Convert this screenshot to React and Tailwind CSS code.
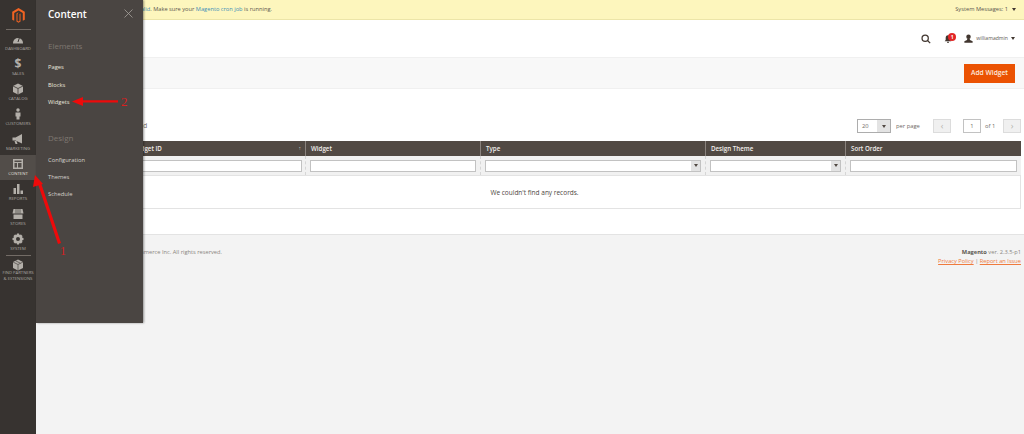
import React from "react";

const Ic = ({ children, w = 12, h = 12 }) => (
  <svg width={w} height={h} viewBox="0 0 24 24" fill="#b3afa9">{children}</svg>
);

const items = [
  ["DASHBOARD", <Ic><path d="M2 20a10 10 0 1 1 20 0v1H2z" /><path d="M12 18l3-9" stroke="#373330" strokeWidth="2" /></Ic>],
  ["SALES", <span className="text-[12px] leading-[12px] font-bold text-[#b3afa9]">$</span>],
  ["CATALOG", <Ic><path d="M12 1l10 5v12l-10 5-10-5V6z" /><path d="M2 6l10 5 10-5M12 11v12" stroke="#373330" strokeWidth="1.6" fill="none" /></Ic>],
  ["CUSTOMERS", <Ic><circle cx="12" cy="4" r="3.5" /><path d="M7 9h10v8h-2v6H9v-6H7z" /></Ic>],
  ["MARKETING", <Ic><path d="M1 9h6l13-7v19L7 15H1z" /><path d="M5 16h4l2 6H7z" /></Ic>],
  ["CONTENT", <Ic><path fillRule="evenodd" d="M2 2h20v20H2zM5 5v3h14V5zM5 10v9h5v-9zM12 10v9h7v-9z" /></Ic>, true],
  ["REPORTS", <Ic><path d="M3 10h5v12H3zM10 2h5v20h-5zM17 15h5v7h-5z" /></Ic>],
  ["STORES", <Ic><path d="M3 2h18l2 9H1z" /><path d="M3 13h18v9H3z" /><path d="M8 2v9M12 2v9M16 2v9" stroke="#373330" strokeWidth="1.2" /></Ic>],
  ["SYSTEM", <Ic><path fillRule="evenodd" d="M10 1h4l1 3 3-1 3 3-1 3 3 1v4l-3 1 1 3-3 3-3-1-1 3h-4l-1-3-3 1-3-3 1-3-3-1v-4l3-1-1-3 3-3 3 1zM12 8a4 4 0 1 0 0 8 4 4 0 0 0 0-8z" /></Ic>],
];

const Th = ({ className = "", children }) => (
  <div className={`h-full flex items-center pl-[5px] border-l border-[#8a837e] text-[#f1eeeb] font-semibold text-[6.2px] ${className}`}>{children}</div>
);

const Select = () => (
  <div className="h-[12px] flex-1 flex bg-white border border-[#c2c2c2]">
    <div className="flex-1" />
    <div className="w-[9px] bg-[#e3e3e3] flex items-center justify-center">
      <div className="border-x-[2px] border-t-[3px] border-x-transparent border-t-[#514943]" />
    </div>
  </div>
);

const Inp = () => <div className="h-[12px] flex-1 bg-white border border-[#c2c2c2]" />;

const Cell = ({ className = "", children }) => (
  <div className={`h-full flex items-center px-[4px] border-l border-dashed border-[#d6d6d6] ${className}`}>{children}</div>
);

export default function App() {
  return (
    <div className="relative w-[1024px] h-[434px] overflow-hidden flex bg-white font-['Open_Sans',sans-serif] text-[#41362f]">
      {/* Sidebar */}
      <aside className="w-[36px] shrink-0 bg-[#373330] flex flex-col items-center">
        <div className="h-[30px] w-[25px] border-b border-[#736c66] flex items-start justify-center pt-[8px]">
          <svg width="15" height="16" viewBox="0 0 24 28">
            <path d="M12 0L1 6.500v14l3.500 2V8.700L12 4.400l7.500 4.300v13.800l3.500-2v-14z" fill="#f26322" />
            <path d="M12 7.500L8.500 9.600V23.500L12 26l3.500-2.500V9.600l-1.700 1v12l-1.800 1-1.800-1v-12z" fill="#f26322" />
          </svg>
        </div>
        {items.map(([label, icon, active]) => (
          <div key={label} className={`w-full h-[25px] shrink-0 flex flex-col items-center justify-end pb-[4px] ${active ? "bg-[#524d49]" : ""}`}>
            <div className="h-[13px] flex items-center justify-center">{icon}</div>
            <div className={`text-[4.3px] leading-[6px] ${active ? "text-[#e3e0dd]" : "text-[#aaa6a0]"}`}>{label}</div>
          </div>
        ))}
        <div className="w-[25px] border-t border-[#736c66]" />
        <div className="pt-[3px] flex flex-col items-center">
          <Ic><path d="M12 1l10 5v12l-10 5-10-5V6z" /><path d="M2 6l10 5 10-5M7 3.500l10 5M12 11v12" stroke="#373330" strokeWidth="1.2" fill="none" /></Ic>
          <div className="-mt-px text-[4.2px] leading-[6px] text-[#aaa6a0] text-center whitespace-nowrap">FIND PARTNERS<br />&amp; EXTENSIONS</div>
        </div>
      </aside>

      {/* Main */}
      <main className="flex-1 min-w-0 flex flex-col">
        <div className="h-[20px] shrink-0 bg-[#fdf6bd] border-b border-[#ece5a8] flex items-center justify-between pr-[8px] text-[5.700px] text-[#5c5750]">
          <div className="ml-[107px] w-[129px] overflow-hidden flex justify-end whitespace-nowrap">
            <span className="shrink-0"><span className="text-[#3d8fb8]">invalid</span>. Make sure your <span className="text-[#3d8fb8]">Magento cron job</span> is running.</span>
          </div>
          <div className="flex items-center gap-[4px]">System Messages: 1 <span className="border-x-[2px] border-t-[3px] border-x-transparent border-t-[#41362f]" /></div>
        </div>

        <header className="h-[37px] shrink-0 flex items-center justify-end pr-[9px]">
          <svg width="10" height="10" viewBox="0 0 24 24" fill="none" stroke="#41362f" strokeWidth="3" className="mr-[13px]"><circle cx="10" cy="10" r="7.500" /><path d="M15 15l7 7" /></svg>
          <div className="relative mr-[12px] w-[8px] h-[8px] mt-[1px]">
            <svg width="8" height="8" viewBox="0 0 24 24" fill="#41362f"><path d="M12 1c5 0 7 4 7 9v5l3 4H2l3-4v-5c0-5 2-9 7-9z" /><path d="M9 20h6v3H9z" /></svg>
            <div className="absolute -top-[2px] left-[4px] w-[8px] h-[8px] rounded-full bg-[#e22626] text-white text-[5px] leading-[8px] text-center font-bold">1</div>
          </div>
          <svg width="9" height="9" viewBox="0 0 24 24" fill="#41362f" className="mr-[3px]"><circle cx="12" cy="7" r="6" /><path d="M9 12h6l1 4 7 3v4H1v-4l7-3z" /></svg>
          <span className="text-[5.100px] text-[#5c5750]">williamadmin</span>
          <span className="ml-[3px] border-x-[2px] border-t-[3px] border-x-transparent border-t-[#41362f]" />
        </header>

        <div className="h-[32px] shrink-0 bg-[#f8f8f8] border-y border-[#f0f0f0] flex items-center justify-end pr-[9px]">
          <div className="w-[51px] h-[19px] bg-[#eb5202] text-[#fbe9df] text-[6.700px] font-semibold flex items-center justify-center">Add Widget</div>
        </div>

        <section className="flex-1 flex flex-col pl-[12px] pr-[3px] min-h-0">
          <div className="h-[52px] shrink-0 flex items-end pb-[8px]">
            <div className="flex-1 text-[6.5px] leading-[14px] text-[#6f6a66] pl-[51px]">0 records found</div>
            <div className="flex items-center text-[5.800px] text-[#6f6a66]">
              <div className="w-[34px] h-[14px] flex border border-[#adadad] bg-white">
                <div className="flex-1 pl-[4px] leading-[12px]">20</div>
                <div className="w-[13px] bg-[#e3e3e3] flex items-center justify-center"><div className="border-x-[2px] border-t-[3px] border-x-transparent border-t-[#514943]" /></div>
              </div>
              <span className="ml-[5px] w-[37px]">per page</span>
              <div className="w-[18px] h-[14px] bg-[#f0f0f0] border border-[#dcdcdc] text-[#b5b2ae] text-[9px] leading-[11px] text-center">‹</div>
              <div className="ml-[12px] w-[18px] h-[14px] bg-white border border-[#c2c2c2] text-center leading-[12px]">1</div>
              <span className="ml-[4px] w-[18px]">of 1</span>
              <div className="w-[18px] h-[14px] bg-[#f0f0f0] border border-[#dcdcdc] text-[#b5b2ae] text-[9px] leading-[11px] text-center">›</div>
            </div>
          </div>

          <div className="shrink-0 border-x border-b border-[#e3e3e3]">
            <div className="h-[15px] bg-[#514943] grid grid-cols-[257px_175px_225px_140px_1fr] items-center -mx-px">
              <div className="h-full flex items-center justify-between pl-[85px] pr-[4px] text-[#f1eeeb] font-semibold text-[6.2px]">
                <span>Widget ID</span><span className="text-[5px] text-[#c7c2bd]">↑</span>
              </div>
              <Th>Widget</Th><Th>Type</Th><Th>Design Theme</Th><Th>Sort Order</Th>
            </div>
            <div className="h-[20px] bg-[#f1f1f1] grid grid-cols-[257px_175px_225px_140px_1fr] items-center border-b border-[#e3e3e3] -mx-px">
              <div className="h-full flex items-center pr-[3px]"><Inp /></div>
              <Cell><Inp /></Cell>
              <Cell><Select /></Cell>
              <Cell><Select /></Cell>
              <Cell><Inp /></Cell>
            </div>
            <div className="h-[32px] pt-[1px] flex items-center justify-center text-[6.5px] text-[#4d4640]">We couldn't find any records.</div>
          </div>

          <div className="h-[26px] shrink-0" />
        </section>

        <footer className="h-[200px] shrink-0 bg-[#f3f3f3] border-t border-[#e3e3e3] flex justify-between pr-[3px] pt-[13px] text-[#8a8580]">
          <div className="ml-[107px] w-[79px] h-[9px] overflow-hidden flex justify-end text-[5.700px] leading-[9px] whitespace-nowrap">
            <span className="shrink-0">Copyright © 2020 Magento Commerce Inc. All rights reserved.</span>
          </div>
          <div className="text-right text-[5.700px] leading-[9px]">
            <div><b className="text-[#5c5750]">Magento</b> ver. 2.3.5-p1</div>
            <div className="text-[#ef7a3d]"><span className="underline">Privacy Policy</span> <span className="text-[#8a8580]">|</span> <span className="underline">Report an Issue</span></div>
          </div>
        </footer>
      </main>

      {/* Flyout menu */}
      <nav className="absolute left-[36px] top-0 w-[107px] h-[323px] bg-[#4a4542] shadow-[1px_0_2px_rgba(0,0,0,0.4)] pl-[12px] text-white">
        <div className="h-[27px] pt-[7px] text-[10px] leading-[14px] font-semibold flex justify-between pr-[10px]">
          <span>Content</span>
          <svg width="9" height="9" viewBox="0 0 9 9" stroke="#a6a19c" strokeWidth="0.8" className="mt-[2px]"><path d="M0.500 0.500l8 8M8.500 0.500l-8 8" /></svg>
        </div>
        <div className="mt-[13px] text-[8px] leading-[12px] text-[#7e7771]">Elements</div>
        <div className="mt-[7px] flex flex-col text-[5.800px] leading-[17.500px] text-[#e9e5de]">
          <span>Pages</span><span>Blocks</span><span>Widgets</span>
        </div>
        <div className="mt-[20px] text-[8px] leading-[12px] text-[#7e7771]">Design</div>
        <div className="mt-[8px] flex flex-col text-[5.800px] leading-[17.300px] text-[#d6d2cc]">
          <span>Configuration</span><span>Themes</span><span>Schedule</span>
        </div>
      </nav>

      {/* Annotations */}
      <svg className="absolute left-0 top-0 pointer-events-none" width="1024" height="434" fill="#ee0a0a">
        <path d="M61 243L41 183l-3 1 20 60z" />
        <path d="M35 175l8 9-10 3z" />
        <path d="M118 100.200H81v2.200h37z" />
        <path d="M72 101.500l11-4.500v9z" />
      </svg>
      <span className="absolute left-[60px] top-[245px] text-[12px] leading-[12px] text-[#d92020] font-['Liberation_Serif',serif]">1</span>
      <span className="absolute left-[121px] top-[95px] text-[13px] leading-[13px] text-[#d92020] font-['Liberation_Serif',serif]">2</span>
    </div>
  );
}
